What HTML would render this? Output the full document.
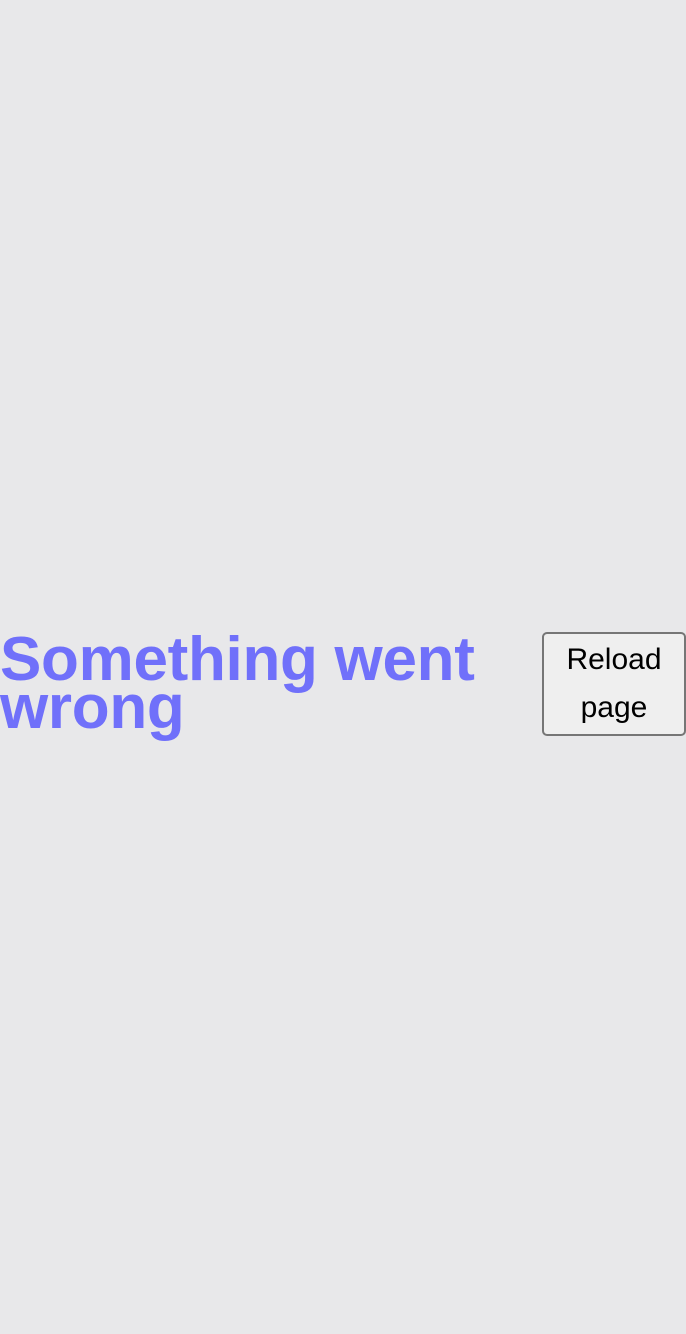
<!DOCTYPE html>
<html><head><meta charset="utf-8"><style>
html,body{margin:0;padding:0;background:#e8e8ea;width:686px;height:1334px;overflow:hidden;}
h1{position:absolute;left:0;top:636px;margin:0;font-family:"Liberation Sans",sans-serif;font-weight:bold;font-size:62px;line-height:48px;color:#7070fa;letter-spacing:-0.3px;width:530px;}
.btn{position:absolute;left:542px;top:632px;width:140px;height:98px;padding-top:2px;border:2px solid #767676;border-radius:5px;background:#efefef;font-family:"Liberation Sans",sans-serif;font-size:30px;line-height:48px;text-align:center;color:#000;}
</style></head><body>
<h1>Something went wrong</h1>
<div class="btn">Reload<br>page</div>
</body></html>
